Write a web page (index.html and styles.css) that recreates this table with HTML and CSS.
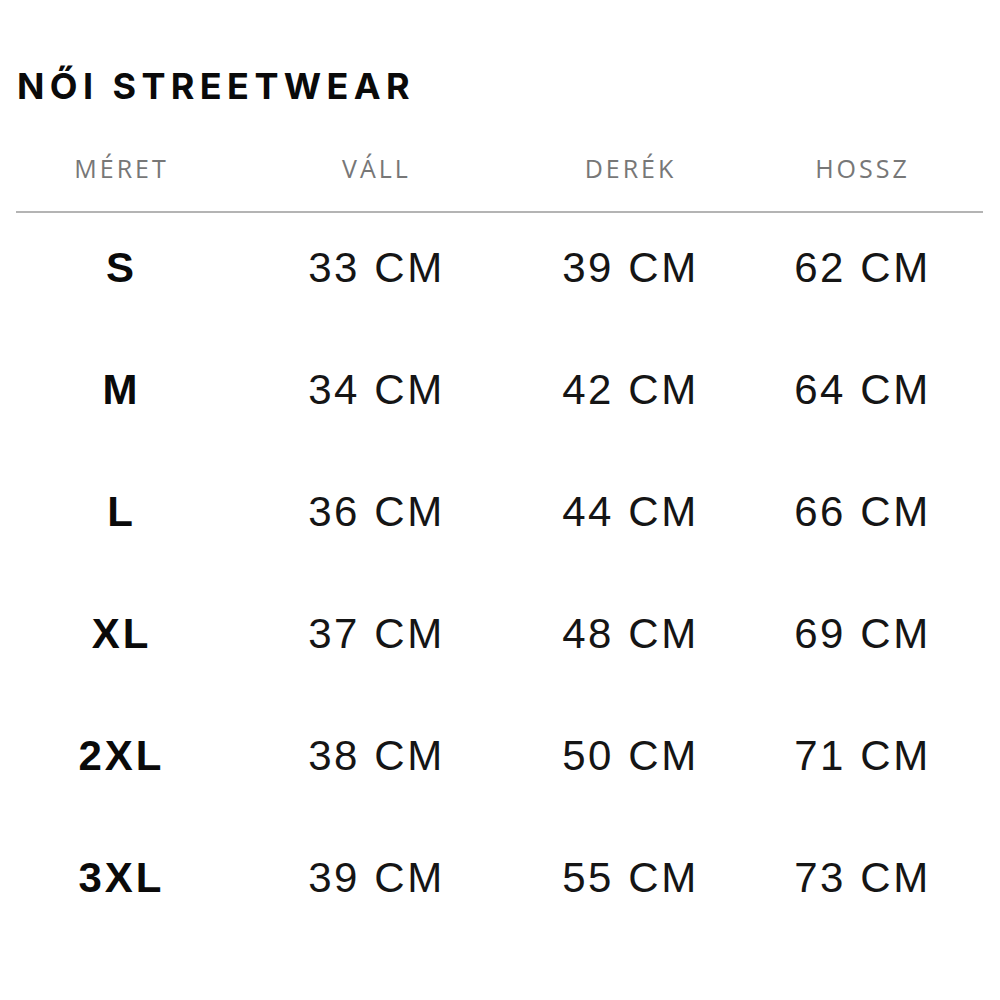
FILE: index.html
```html
<!DOCTYPE html>
<html lang="hu">
<head>
<meta charset="utf-8">
<title>Női streetwear mérettáblázat</title>
<link rel="stylesheet" href="styles.css">
</head>
<body>
<main class="chart">
  <h1 class="title">NŐI STREETWEAR</h1>
  <div class="row head">
    <div class="cell">MÉRET</div>
    <div class="cell">VÁLL</div>
    <div class="cell">DERÉK</div>
    <div class="cell">HOSSZ</div>
  </div>
  <div class="body">
    <div class="row"><div class="cell size">S</div><div class="cell">33 CM</div><div class="cell">39 CM</div><div class="cell">62 CM</div></div>
    <div class="row"><div class="cell size">M</div><div class="cell">34 CM</div><div class="cell">42 CM</div><div class="cell">64 CM</div></div>
    <div class="row"><div class="cell size">L</div><div class="cell">36 CM</div><div class="cell">44 CM</div><div class="cell">66 CM</div></div>
    <div class="row"><div class="cell size">XL</div><div class="cell">37 CM</div><div class="cell">48 CM</div><div class="cell">69 CM</div></div>
    <div class="row"><div class="cell size">2XL</div><div class="cell">38 CM</div><div class="cell">50 CM</div><div class="cell">71 CM</div></div>
    <div class="row"><div class="cell size">3XL</div><div class="cell">39 CM</div><div class="cell">55 CM</div><div class="cell">73 CM</div></div>
  </div>
</main>
</body>
</html>
```

FILE: styles.css
```css
html, body {
  margin: 0;
  padding: 0;
  background: #ffffff;
}

.chart {
  width: 967px;
  margin-left: 16px;
  padding-top: 67px;
  font-family: "Liberation Sans", Arial, sans-serif;
  color: #111111;
}

.title {
  margin: 0 0 0 1px;
  font-family: Inter, "Liberation Sans", Arial, sans-serif;
  font-weight: 700;
  font-size: 36px;
  line-height: 38px;
  letter-spacing: 5.4px;
  color: #0a0a0a;
}

.row {
  display: grid;
  grid-template-columns: 211px 299px 209px 1fr;
  text-align: center;
}

.row > .cell:last-child {
  padding-left: 7px;
}

.head {
  margin-top: 43px;
  padding-bottom: 23px;
  border-bottom: 2px solid #b4b4b4;
  font-family: "Open Sans", "Liberation Sans", sans-serif;
  font-weight: 400;
  font-size: 25px;
  line-height: 40px;
  letter-spacing: 3px;
  color: #777777;
}

.body {
  display: flex;
  flex-direction: column;
  gap: 22px;
  padding-top: 5px;
}

.body .row {
  font-size: 42px;
  line-height: 100px;
  letter-spacing: 2.6px;
  color: #151515;
}

.size {
  font-weight: 700;
  letter-spacing: 3px;
  color: #0a0a0a;
}
```
